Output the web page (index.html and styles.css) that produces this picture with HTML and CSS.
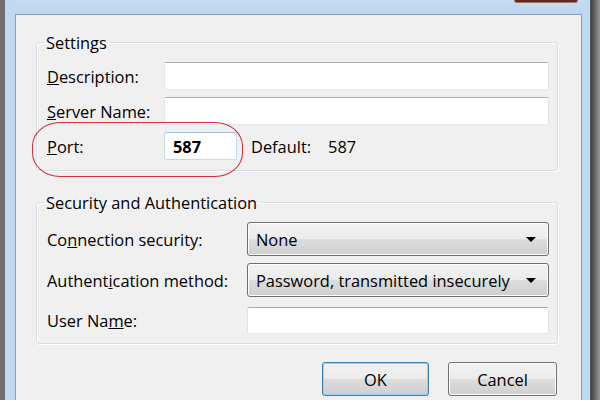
FILE: index.html
```html
<!DOCTYPE html>
<html>
  <head>
    <meta charset="utf-8">
    <title>Outgoing Server</title>
    <link rel="stylesheet" href="styles.css">
  </head>
  <body>
    <div class="screen">
      <div class="window">
        <div class="titlebar">
          <span class="close"></span>
        </div>

        <div class="dialog">
          <fieldset class="group settings">
            <legend>Settings</legend>
            <div class="row">
              <label class="label"><u>D</u>escription:</label>
              <input type="text" class="field wide">
            </div>
            <div class="row">
              <label class="label"><u>S</u>erver Name:</label>
              <input type="text" class="field wide">
            </div>
            <div class="row port-row">
              <label class="label"><u>P</u>ort:</label>
              <input type="text" class="field port" value="587">
              <span class="default">Default:</span>
              <span class="default-value">587</span>
              <span class="mark"></span>
            </div>
          </fieldset>

          <fieldset class="group security">
            <legend>Security and Authentication</legend>
            <div class="row tall">
              <label class="label">Co<u>n</u>nection security:</label>
              <div class="combo"><span>None</span><span class="arrow"></span></div>
            </div>
            <div class="row tall">
              <label class="label">Authent<u>i</u>cation method:</label>
              <div class="combo"><span>Password, transmitted insecurely</span><span class="arrow"></span></div>
            </div>
            <div class="row user-row">
              <label class="label">User Na<u>m</u>e:</label>
              <input type="text" class="field wide">
            </div>
          </fieldset>

          <div class="buttons">
            <button class="btn default-btn">OK</button>
            <button class="btn cancel">Cancel</button>
          </div>
        </div>
      </div>
    </div>
  </body>
</html>
```

FILE: styles.css
```css
body {
  margin: 0;
  font-family: "Open Sans", "Noto Sans", sans-serif;
  font-size: 16.4px;
  color: #000;
}

.screen {
  width: 600px;
  height: 400px;
  display: flex;
  background: linear-gradient(90deg, #6f6f6f 0, #6f6f6f 590px, #3f3f3f 591px, #9a9a9a 600px);
}

.window {
  width: 567px;
  margin-left: 5px;
  padding: 0 8px 0 10px;
  display: flex;
  flex-direction: column;
  background: #c0d8f0;
}

.titlebar {
  height: 14px;
  display: flex;
  justify-content: flex-end;
  padding-right: 4px;
  background: linear-gradient(#c6ddf3, #bcd5ee);
}

.close {
  width: 62px;
  height: 2px;
  background: #5b2a24;
  border: 1px solid #a07060;
  border-top: none;
  border-radius: 0 0 3px 3px;
}

.dialog {
  flex: 1;
  border: 1px solid #8aa0b6;
  border-bottom: none;
  background: #f0f0f0;
  padding: 17px 23px 0 20px;
  display: flex;
  flex-direction: column;
}

.group {
  margin: 0;
  padding: 9px 8px 10px 10px;
  border: 1px solid #d5dfe5;
  border-radius: 3px;
  box-shadow: inset 1px 1px 0 #fff, 1px 1px 0 #fff;
}

.group legend {
  margin-left: -3px;
  padding: 0 3px 0 2px;
  line-height: 21px;
}

.security {
  margin-top: 21px;
  padding-bottom: 9px;
}

.row {
  display: flex;
  align-items: center;
  height: 28px;
}

.row + .row {
  margin-top: 7px;
}

.row.tall {
  height: 34px;
}

.row.user-row {
  height: 27px;
  margin-top: 10px;
}

.label {
  flex: none;
  width: 117px;
}

.security .label {
  width: 200px;
}

.field {
  box-sizing: border-box;
  height: 100%;
  margin: 0;
  padding: 0 8px;
  font: inherit;
  background: #fff;
  border: 1px solid #e2e3ea;
  border-top-color: #abadb3;
  border-bottom-color: #e3e9ef;
  border-radius: 2px;
}

.field.wide {
  flex: 1;
}

.field.port {
  width: 73px;
  font-weight: bold;
  border-color: #c5dae8;
  border-top-color: #a8c3d8;
}

.default {
  margin-left: 14px;
}

.default-value {
  margin-left: 17px;
}

.port-row {
  position: relative;
}

.mark {
  position: absolute;
  left: -15px;
  top: -10px;
  width: 209px;
  height: 53px;
  border: 1px solid #d22f3b;
  border-radius: 28px / 24px;
}

.combo {
  flex: 1;
  box-sizing: border-box;
  height: 100%;
  display: flex;
  align-items: center;
  justify-content: space-between;
  padding: 0 12px 0 8px;
  border: 1px solid #707070;
  border-radius: 3px;
  background: linear-gradient(#f2f2f2 0, #ebebeb 50%, #dddddd 50%, #cfcfcf 100%);
  box-shadow: inset 0 0 0 1px #fcfcfc;
}

.arrow {
  width: 0;
  height: 0;
  border-left: 5px solid transparent;
  border-right: 5px solid transparent;
  border-top: 5px solid #000;
}

.buttons {
  display: flex;
  justify-content: flex-end;
  gap: 19px;
  margin-top: 18px;
  padding-right: 1px;
}

.btn {
  width: 107px;
  height: 34px;
  font: inherit;
  color: #000;
  border: 1px solid #707070;
  border-radius: 3px;
  background: linear-gradient(#f2f2f2 0, #ebebeb 50%, #dddddd 50%, #cfcfcf 100%);
  box-shadow: inset 0 0 0 1px #fcfcfc;
}

.btn.cancel {
  width: 109px;
}

.btn.default-btn {
  border-color: #3c7fb1;
  box-shadow: inset 0 0 0 1px #8fd3f6;
}
```
